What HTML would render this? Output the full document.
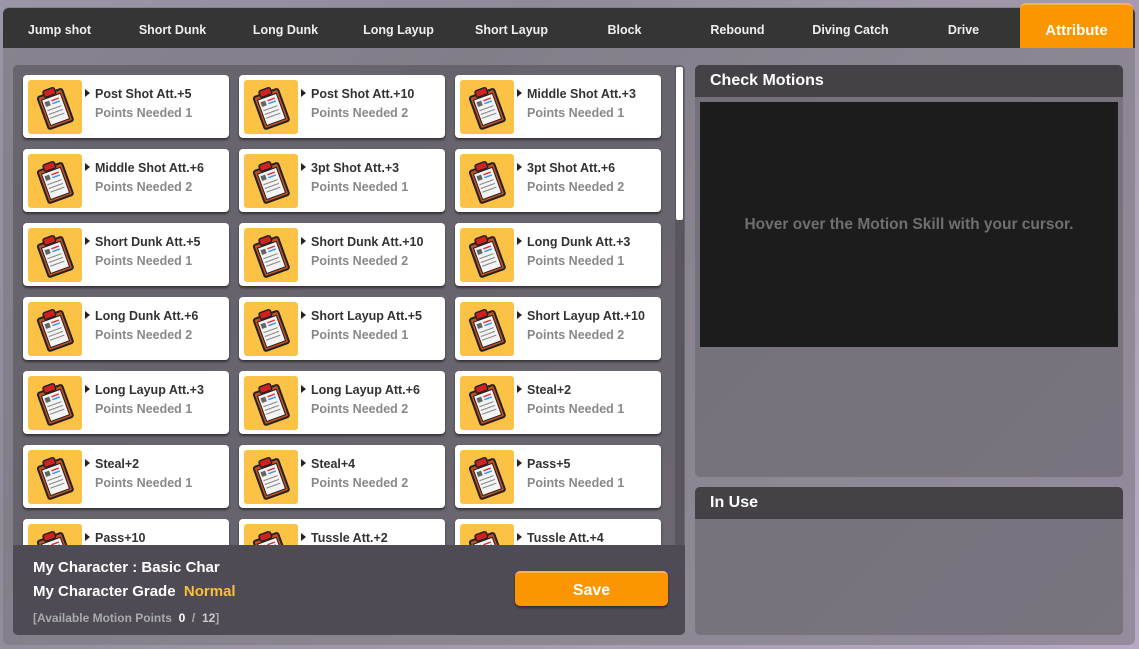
<!DOCTYPE html>
<html><head><meta charset="utf-8"><style>
*{margin:0;padding:0;box-sizing:border-box}
body{width:1139px;height:649px;overflow:hidden;font-family:"Liberation Sans",sans-serif;position:relative;
background:linear-gradient(135deg,#9a96a8 0%,#8f8a98 30%,#a29aaa 60%,#b7a9c6 100%);}
.frame{position:absolute;left:3px;top:7px;width:1132px;height:638px;background:rgba(120,116,124,.55);border-radius:6px}
.tabs{position:absolute;left:3px;top:8px;width:1132px;height:40px;background:#353535;border-radius:6px 6px 0 0}
.tab{position:absolute;top:8px;width:113px;height:40px;line-height:45px;text-align:center;color:#eee;font-weight:bold;font-size:12.5px}
.tab.on{top:3px;height:45px;line-height:52px;background:#fb9600;border-radius:6px 6px 0 0;color:#fff;font-size:15px;border-top:2px solid #ffb440}
.left{position:absolute;left:13px;top:65px;width:672px;height:570px;background:rgba(85,82,90,.6);border-radius:5px;overflow:hidden}
.card{position:absolute;width:206px;height:63px;background:#fff;border-radius:4px;box-shadow:0 2px 2px rgba(0,0,0,.5)}
.ic{position:absolute;left:5px;top:5px;width:54px;height:54px;background:#fcc246;border-radius:3px}
.t{position:absolute;left:72px;top:12px;font-size:12.5px;font-weight:bold;color:#333}
.t:before{content:"";position:absolute;left:-10px;top:2px;border-left:5px solid #222;border-top:4px solid transparent;border-bottom:4px solid transparent}
.p{position:absolute;left:72px;top:31px;font-size:12.5px;font-weight:bold;color:#888}
.foot{position:absolute;left:0;top:480px;width:672px;height:90px;background:#4f4b55}
.scroll{position:absolute;left:662px;top:2px;width:9px;height:478px;background:#5a5660}
.thumb{position:absolute;left:663px;top:2px;width:7px;height:153px;background:#fff;border-radius:2px}
.save{position:absolute;left:502px;top:506px;width:153px;height:35px;background:#fb9600;border-radius:5px;color:#fff;font-weight:bold;font-size:16px;text-align:center;line-height:35px;box-shadow:0 2px 2px rgba(0,0,0,.4);border-top:2px solid #ffb440}
.panel{position:absolute;left:695px;width:428px;background:rgba(110,106,114,.7);border-radius:5px;overflow:hidden}
.ph{height:32px;background:#444246;color:#fff;font-weight:bold;font-size:16px;padding:7px 15px}
</style></head><body>
<div class="frame"></div>
<div class="tabs"></div>
<div class="tab" style="left:3px">Jump shot</div>
<div class="tab" style="left:116px">Short Dunk</div>
<div class="tab" style="left:229px">Long Dunk</div>
<div class="tab" style="left:342px">Long Layup</div>
<div class="tab" style="left:455px">Short Layup</div>
<div class="tab" style="left:568px">Block</div>
<div class="tab" style="left:681px">Rebound</div>
<div class="tab" style="left:794px">Diving Catch</div>
<div class="tab" style="left:907px">Drive</div>
<div class="tab on" style="left:1020px">Attribute</div>

<div class="left" id="L">
<div class="scroll"></div><div class="thumb"></div>
<div class="foot">
<div style="position:absolute;left:20px;top:14px;color:#fff;font-weight:bold;font-size:15px">My Character : Basic Char</div>
<div style="position:absolute;left:20px;top:38px;color:#fff;font-weight:bold;font-size:15px">My Character Grade &nbsp;<span style="color:#fbbf3a">Normal</span></div>
<div style="position:absolute;left:20px;top:66px;color:#aaa;font-weight:bold;font-size:12px">[Available Motion Points &nbsp;<span style="color:#fff">0</span> &nbsp;/ &nbsp;<span style="color:#ccc">12</span>]</div>
</div>
<div class="save">Save</div>
</div>

<div class="panel" style="top:65px;height:412px"><div class="ph">Check Motions</div>
<div style="position:absolute;left:5px;top:37px;width:418px;height:245px;background:#1c1c1c;color:#6f6f6f;font-weight:bold;font-size:15.5px;text-align:center;line-height:245px">Hover over the Motion Skill with your cursor.</div></div>
<div class="panel" style="top:487px;height:148px"><div class="ph">In Use</div></div>

<script>
var items=[["Post Shot Att.+5",1],["Post Shot Att.+10",2],["Middle Shot Att.+3",1],["Middle Shot Att.+6",2],["3pt Shot Att.+3",1],["3pt Shot Att.+6",2],["Short Dunk Att.+5",1],["Short Dunk Att.+10",2],["Long Dunk Att.+3",1],["Long Dunk Att.+6",2],["Short Layup Att.+5",1],["Short Layup Att.+10",2],["Long Layup Att.+3",1],["Long Layup Att.+6",2],["Steal+2",1],["Steal+2",1],["Steal+4",2],["Pass+5",1],["Pass+10",2],["Tussle Att.+2",1],["Tussle Att.+4",2]];
var ic='<svg width="54" height="54" viewBox="0 0 54 54"><g transform="rotate(-20 27 28)"><rect x="14" y="12" width="26" height="34" rx="2" fill="#c8501e" stroke="#222" stroke-width="2"/><rect x="17" y="16" width="20" height="27" fill="#f4f4f4" stroke="#222" stroke-width="1"/><rect x="21" y="8" width="12" height="7" rx="2" fill="#d02020" stroke="#222" stroke-width="1.5"/><rect x="19" y="19" width="5" height="5" fill="#666"/><line x1="26" y1="20" x2="34" y2="20" stroke="#e33" stroke-width="1.5"/><line x1="26" y1="23" x2="34" y2="23" stroke="#39f" stroke-width="1.5"/><line x1="19" y1="28" x2="34" y2="28" stroke="#888"/><line x1="19" y1="32" x2="34" y2="32" stroke="#888"/><line x1="19" y1="36" x2="34" y2="36" stroke="#888"/></g></svg>';
var L=document.getElementById('L'),h='';
items.forEach(function(it,i){var c=i%3,r=Math.floor(i/3);
h+='<div class="card" style="left:'+(10+c*216)+'px;top:'+(10+r*74)+'px"><div class="ic">'+ic+'</div><div class="t">'+it[0]+'</div><div class="p">Points Needed '+it[1]+'</div></div>';});
L.insertAdjacentHTML('afterbegin',h);
</script>
</body></html>
